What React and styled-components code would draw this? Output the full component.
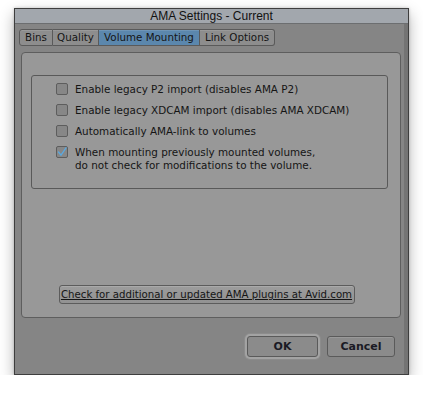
import React from 'react'
import styled, { createGlobalStyle } from 'styled-components'

const Global = createGlobalStyle`
  html, body { margin: 0; padding: 0; background: #fff; }
  body { font-family: "DejaVu Sans", "Liberation Sans", sans-serif; }
`

const Window = styled.div`
  margin: 8px 0 0 14px;
  width: 395px;
  height: 367px;
  box-sizing: border-box;
  border: 1px solid #3e3e3e;
  background: #858585;
  box-shadow: 0 6px 14px rgba(0,0,0,0.3), 0 0 3px rgba(0,0,0,0.2);
  display: flex;
  flex-direction: column;
`

const TitleBar = styled.div`
  height: 14px;
  background: #a2a7ad;
  border-bottom: 1px solid #6c6e70;
  color: #111;
  font-family: "Liberation Sans", Arial, sans-serif;
  font-size: 12px;
  line-height: 15px;
  text-align: center;
`

const Body = styled.div`
  flex: 1;
  display: flex;
  flex-direction: column;
  padding: 5px 3px 0 4px;
  border-right: 4px solid #747474;
`

const Tabs = styled.div`
  display: flex;
  height: 17px;
`

const Tab = styled.div`
  box-sizing: border-box;
  width: ${p => p.w}px;
  height: 17px;
  font-size: 10.3px;
  line-height: 15px;
  text-align: center;
  white-space: nowrap;
  color: #151515;
  background: ${p => p.active ? '#5b87ad' : '#8d8d8d'};
  border: 1px solid #5a5a5a;
  border-left: ${p => p.first ? '1px solid #5a5a5a' : 'none'};
  border-radius: ${p => p.first ? '3px 0 0 3px' : p.last ? '0 3px 3px 0' : '0'};
  box-shadow: inset 0 1px 0 rgba(255,255,255,0.12);
`

const Panel = styled.div`
  margin: 6px 0 0 2px;
  height: 266px;
  box-sizing: border-box;
  border: 1px solid #5e5e5e;
  border-radius: 4px;
  background: #989898;
  padding: 22px 12px 0 9px;
  display: flex;
  flex-direction: column;
`

const Group = styled.div`
  height: 114px;
  box-sizing: border-box;
  border: 1px solid #595959;
  border-radius: 3px;
  padding: 7px 0 0 24px;
  display: flex;
  flex-direction: column;
  gap: 8px;
`

const Row = styled.div`
  display: flex;
  align-items: flex-start;
  gap: 7px;
  font-size: 10.4px;
  line-height: 13px;
  color: #151515;
`

const Box = styled.div`
  flex: none;
  width: 12px;
  height: 12px;
  box-sizing: border-box;
  border: 1px solid #5d5d5d;
  border-radius: 2px;
  background: #878787;
  display: flex;
  align-items: center;
  justify-content: center;
`

const LinkWrap = styled.div`
  margin-top: auto;
  margin-bottom: 13px;
  display: flex;
  justify-content: center;
  padding-right: 6px;
`

const LinkButton = styled.div`
  width: 296px;
  height: 19px;
  box-sizing: border-box;
  border: 1px solid #5c5c5c;
  border-radius: 3px;
  background: linear-gradient(#9c9c9c, #929292);
  box-shadow: inset 0 1px 0 rgba(255,255,255,0.15);
  font-size: 10.2px;
  line-height: 17px;
  text-align: center;
  white-space: nowrap;
  color: #151515;
  text-decoration: underline;
`

const Footer = styled.div`
  display: flex;
  justify-content: flex-end;
  gap: 9px;
  padding: 18px 6px 0 0;
`

const Button = styled.div`
  width: ${p => p.w}px;
  height: 21px;
  box-sizing: border-box;
  border: 1px solid #5a5a5a;
  border-radius: 3px;
  background: #8b8b8b;
  box-shadow: ${p => p.focus ? '0 0 0 2px #a3a3a3, 0 0 0 3px #8c8c8c' : 'inset 0 1px 0 rgba(255,255,255,0.12)'};
  font-size: 11px;
  font-weight: bold;
  line-height: 19px;
  text-align: center;
  color: #1a1a24;
`

const Check = () => (
  <svg width="10" height="10" viewBox="0 0 10 10">
    <path d="M1.5 5 L4 8.2 L9 0.8" fill="none" stroke="#5aa9e0" strokeWidth="1.3" strokeLinecap="round" />
  </svg>
)

const options = [
  { text: ['Enable legacy P2 import (disables AMA P2)'] },
  { text: ['Enable legacy XDCAM import (disables AMA XDCAM)'] },
  { text: ['Automatically AMA-link to volumes'] },
  { text: ['When mounting previously mounted volumes,', 'do not check for modifications to the volume.'], on: true },
]

export default function App() {
  return (
    <>
      <Global />
      <Window>
        <TitleBar>AMA Settings - Current</TitleBar>
        <Body>
          <Tabs>
            <Tab first w={34}>Bins</Tab>
            <Tab w={46}>Quality</Tab>
            <Tab active w={101}>Volume Mounting</Tab>
            <Tab last w={75}>Link Options</Tab>
          </Tabs>
          <Panel>
            <Group>
              {options.map((o, i) => (
                <Row key={i}>
                  <Box>{o.on && <Check />}</Box>
                  <div>{o.text.map((t, j) => <div key={j}>{t}</div>)}</div>
                </Row>
              ))}
            </Group>
            <LinkWrap>
              <LinkButton>Check for additional or updated AMA plugins at Avid.com</LinkButton>
            </LinkWrap>
          </Panel>
          <Footer>
            <Button focus w={71}>OK</Button>
            <Button w={68}>Cancel</Button>
          </Footer>
        </Body>
      </Window>
    </>
  )
}
